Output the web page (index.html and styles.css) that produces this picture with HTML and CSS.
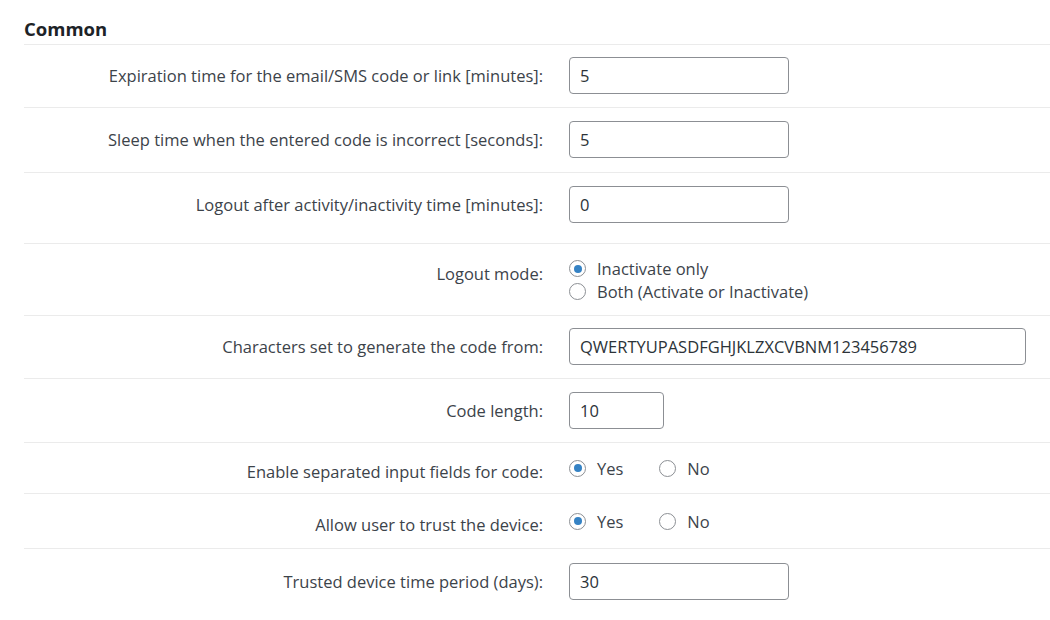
FILE: index.html
```html
<!DOCTYPE html>
<html>
<head>
<meta charset="utf-8">
<link rel="stylesheet" href="styles.css">
</head>
<body>
<div class="page">
  <h2 class="section-title">Common</h2>
  <div class="row r1">
    <label class="label">Expiration time for the email/SMS code or link [minutes]:</label>
    <div class="field"><input class="text medium" type="text" value="5"></div>
  </div>
  <div class="row r2">
    <label class="label">Sleep time when the entered code is incorrect [seconds]:</label>
    <div class="field"><input class="text medium" type="text" value="5"></div>
  </div>
  <div class="row r3">
    <label class="label">Logout after activity/inactivity time [minutes]:</label>
    <div class="field"><input class="text medium" type="text" value="0"></div>
  </div>
  <div class="row r4">
    <label class="label">Logout mode:</label>
    <div class="field stack">
      <label class="opt"><input class="radio" type="radio" name="mode" checked><span>Inactivate only</span></label>
      <label class="opt"><input class="radio" type="radio" name="mode"><span>Both (Activate or Inactivate)</span></label>
    </div>
  </div>
  <div class="row r5">
    <label class="label">Characters set to generate the code from:</label>
    <div class="field"><input class="text wide" type="text" value="QWERTYUPASDFGHJKLZXCVBNM123456789"></div>
  </div>
  <div class="row r6">
    <label class="label">Code length:</label>
    <div class="field"><input class="text small" type="text" value="10"></div>
  </div>
  <div class="row r7">
    <label class="label">Enable separated input fields for code:</label>
    <div class="field inline">
      <label class="opt"><input class="radio" type="radio" name="sep" checked><span>Yes</span></label>
      <label class="opt"><input class="radio" type="radio" name="sep"><span>No</span></label>
    </div>
  </div>
  <div class="row r8">
    <label class="label">Allow user to trust the device:</label>
    <div class="field inline">
      <label class="opt"><input class="radio" type="radio" name="trust" checked><span>Yes</span></label>
      <label class="opt"><input class="radio" type="radio" name="trust"><span>No</span></label>
    </div>
  </div>
  <div class="row r9 last">
    <label class="label">Trusted device time period (days):</label>
    <div class="field"><input class="text medium" type="text" value="30"></div>
  </div>
</div>
</body>
</html>
```
FILE: styles.css
```css
html, body {
  margin: 0;
  padding: 0;
  background: #ffffff;
}
body {
  font-family: "Open Sans", "Noto Sans", "Liberation Sans", sans-serif;
  font-size: 16.5px;
  color: #3c434a;
  overflow: hidden;
}
.page {
  padding-left: 24px;
}
.section-title {
  margin: 0;
  padding-top: 17px;
  height: 27px;
  line-height: 24px;
  font-size: 18.5px;
  font-weight: 700;
  color: #1d2327;
  border-bottom: 1px solid #ebebeb;
}
.row {
  display: grid;
  grid-template-columns: 519px 1fr;
  column-gap: 26px;
  align-items: center;
  border-bottom: 1px solid #ebebeb;
}
.row.last {
  border-bottom: none;
}
.label {
  text-align: right;
  line-height: 22px;
  white-space: nowrap;
}
.r1 { padding: 12px 0 13px; }
.r2 { padding: 13px 0 14px; }
.r3 { padding: 13px 0 20px; }
.r4 { padding: 13px 0 12px; }
.r5 { padding: 12px 0 13px; }
.r6 { padding: 13px 0 13px; }
.r7 { padding: 10px 0 10px; }
.r8 { padding: 12px 0 12px; }
.r9 { padding: 14px 0 14px; }
.r4 .label {
  align-self: start;
  padding-top: 6px;
}
.r7 .label, .r8 .label {
  padding-top: 8px;
}
.text {
  box-sizing: border-box;
  height: 37px;
  border: 1px solid #8c8f94;
  border-radius: 4px;
  padding: 0 10px;
  font-family: inherit;
  font-size: 16.5px;
  color: #2c3338;
  background: #fff;
  outline: none;
  display: block;
}
.medium { width: 220px; }
.wide { width: 457px; }
.small { width: 95px; }
.field.stack {
  display: flex;
  flex-direction: column;
}
.field.inline {
  display: flex;
  column-gap: 36px;
}
.opt {
  display: flex;
  align-items: center;
  line-height: 23px;
  color: #3c434a;
}
.radio {
  -webkit-appearance: none;
  appearance: none;
  box-sizing: border-box;
  width: 17px;
  height: 17px;
  margin: 0 11px 0 0;
  border: 1px solid #8c8f94;
  border-radius: 50%;
  background: #fff;
  position: relative;
  flex: none;
}
.radio:checked::before {
  content: "";
  position: absolute;
  left: 3.5px;
  top: 3.5px;
  width: 8px;
  height: 8px;
  border-radius: 50%;
  background: #3582c4;
}
```
